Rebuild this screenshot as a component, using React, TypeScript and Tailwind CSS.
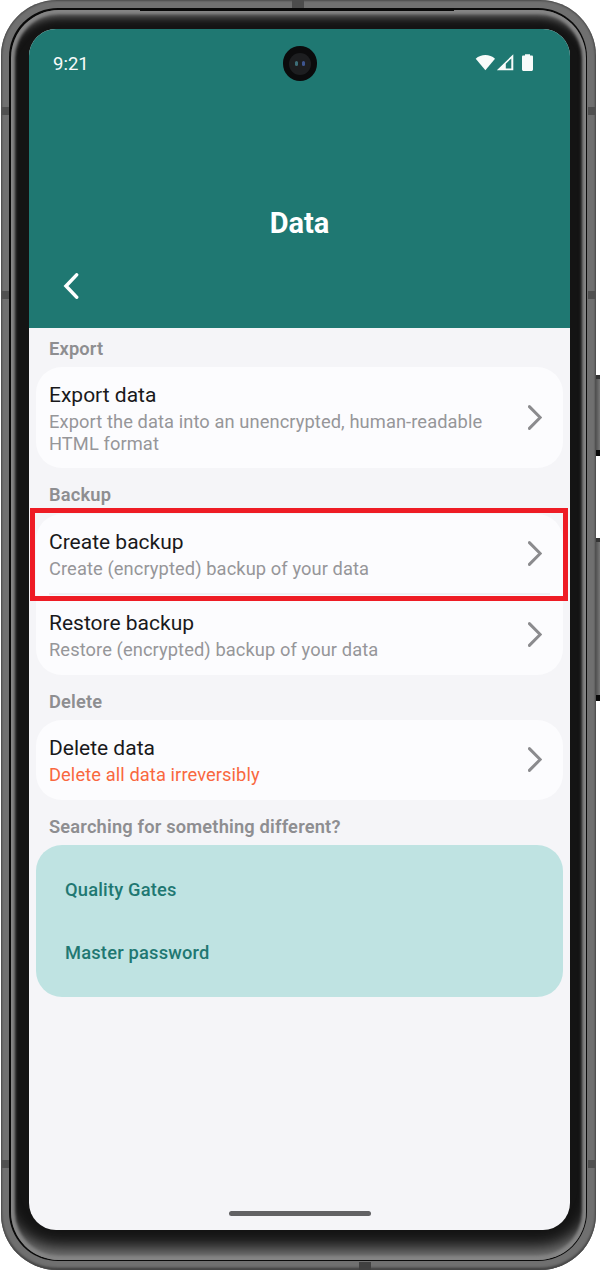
import React from "react";

function Chevron({ className, flip = false, w = 14, h = 25 }: { className?: string; flip?: boolean; w?: number; h?: number }) {
  return (
    <svg width={w} height={h} viewBox="0 0 14 25" fill="none" className={className}>
      <path
        d={flip ? "M12.4 1.8 L2.2 12.5 L12.4 23.2" : "M1.4 1.6 L12.2 12.5 L1.4 23.4"}
        stroke="currentColor"
        strokeWidth={flip ? 3.4 : 3}
        strokeLinecap="round"
        strokeLinejoin="miter"
      />
    </svg>
  );
}

function SectionTitle({ children }: { children: React.ReactNode }) {
  return <h2 className="pl-[13px] text-[18.3px] leading-[22px] font-semibold tracking-[0.17px] text-[#8e8e91]">{children}</h2>;
}

function Row({ title, text, danger = false }: { title: string; text: string; danger?: boolean }) {
  return (
    <div className="flex items-center justify-between pt-[17px] pb-[13px] pl-[13px] pr-[21px]">
      <div className="w-[440px]">
        <div className="text-[21px] leading-[23px] text-[#19191b]">{title}</div>
        <div
          className={
            danger
              ? "mt-1 text-[18.3px] leading-[22px] tracking-[0.09px] text-[#f9683f]"
              : "mt-1 text-[18.3px] leading-[22px] tracking-[0.09px] text-[#969699]"
          }
        >
          {text}
        </div>
      </div>
      <Chevron className="mb-1 text-[#8b8b8e]" />
    </div>
  );
}

function StatusBar() {
  return (
    <div className="relative flex h-[70px] items-center justify-between pl-6 pr-9 text-[#f8fbfa]">
      <span className="text-[18.5px] leading-[22px]">9:21</span>
      <div className="absolute left-[253.5px] top-[17px] flex h-[35px] w-[34px] items-center justify-center rounded-full bg-[#0b0b0c]">
        <div className="flex h-[22px] w-[22px] items-center justify-center gap-1 rounded-full bg-[#1d1e20]">
          <span className="h-[5px] w-[3px] rounded-full bg-[#3d6e78]" />
          <span className="h-[5px] w-[3px] rounded-full bg-[#3e558f]" />
        </div>
      </div>
      <svg width="59" height="20" viewBox="0 0 59 20" className="mt-[-2px]" fill="currentColor">
        <path d="M0.7 5.7 C6 0.8 14.8 0.8 20 5.7 L10.4 17.2Z" />
        <path fillRule="evenodd" d="M21.8 17.2 L38.3 1.2 V17.2Z M30.8 10.7 V15.4 H36.3 V5.5Z" />
        <path d="M50 1.2 H55 V2.6 H57 Q58 2.6 58 3.7 V16.6 Q58 18 56.7 18 H48.3 Q47 18 47 16.6 V3.7 Q47 2.6 48 2.6 H50Z" />
      </svg>
    </div>
  );
}

const card = "rounded-[26px] bg-[#fcfcfe]";

export default function App() {
  return (
    <div className="relative h-[1271px] w-[600px] overflow-hidden bg-white font-['Roboto',sans-serif]">
      <div className="absolute left-[595px] top-[375px] h-[81px] w-[5px] border-t-4 border-b-6 border-t-[#343434] border-b-[#090909] bg-linear-to-r from-[#4a4a4a] to-[#777777]" />
      <div className="absolute left-[595px] top-[538px] h-[163px] w-[5px] border-t-4 border-b-6 border-t-[#343434] border-b-[#090909] bg-linear-to-r from-[#4a4a4a] to-[#777777]" />

      <div className="relative ml-px h-[1270px] w-[595px] rounded-[56px] bg-[#707070] p-2 shadow-[inset_0_0_2px_1px_#4a4a4a,inset_0_-3px_3px_-1px_#3c3c3c]">
        <div className="absolute left-0 top-[107px] h-2 w-2 bg-[#505050]" />
        <div className="absolute left-0 top-[291px] h-2 w-2 bg-[#505050]" />
        <div className="absolute left-0 top-[1160px] h-2 w-2 bg-[#505050]" />
        <div className="absolute right-0 top-[107px] h-2 w-2 bg-[#505050]" />
        <div className="absolute right-0 top-[291px] h-2 w-2 bg-[#505050]" />
        <div className="absolute right-0 top-[1160px] h-2 w-2 bg-[#505050]" />
        <div className="absolute left-[291px] top-0 h-2 w-3 bg-[#4c4c4c]" />
        <div className="absolute bottom-0 left-[358px] h-2 w-3 bg-[#414141]" />

        <div className="relative h-[1253px] w-[578px] rounded-[49px] bg-[#0a0a0a] p-[1.5px]">
          <div className="absolute left-[131px] top-0 z-10 h-[3px] w-[314px] bg-[#080808]" />
          <div className="h-[1250px] w-[575px] rounded-[48px] bg-[#141414] pl-[18.5px] pt-[19.5px] shadow-[inset_0_0_3px_4px_#858585,inset_0_-22px_16px_-10px_#7c7c7c,inset_0_13px_9px_-6px_#6a6a6a]">
            <div className="flex h-[1201px] w-[541px] flex-col overflow-hidden rounded-[27px] bg-[#f5f5f8]">
              <header className="flex h-[299px] shrink-0 flex-col bg-[#1f7872] text-white">
                <StatusBar />
                <h1 className="mt-[107px] text-center text-[29px] leading-[34px] font-bold">Data</h1>
                <button className="ml-[34px] mt-[33px] h-[26px] w-4 text-white" aria-label="Back">
                  <Chevron flip w={16} h={26} />
                </button>
              </header>
              <main className="flex flex-1 flex-col px-[7px] pt-[10px]">
                <SectionTitle>Export</SectionTitle>
                <section className={"mt-[7px] h-[101px] " + card}>
                  <Row title="Export data" text="Export the data into an unencrypted, human-readable HTML format" />
                </section>
                <div className="mt-4"><SectionTitle>Backup</SectionTitle></div>
                <section className={"relative mt-2 h-[161px] " + card}>
                  <Row title="Create backup" text="Create (encrypted) backup of your data" />
                  <div className="mx-[13px] h-[2px] bg-[#f0f0f4]" />
                  <Row title="Restore backup" text="Restore (encrypted) backup of your data" />
                  <div className="absolute left-[-6px] top-[-6px] h-[93px] w-[538px] border-5 border-[#ee1c25]" />
                </section>
                <div className="mt-4"><SectionTitle>Delete</SectionTitle></div>
                <section className={"mt-[7px] h-[80px] " + card}>
                  <Row title="Delete data" text="Delete all data irreversibly" danger />
                </section>
                <div className="mt-4"><SectionTitle>Searching for something different?</SectionTitle></div>
                <section className="mt-[7px] flex h-[152px] flex-col gap-[41px] rounded-[26px] bg-[#bfe3e2] pl-[29px] pt-[34px] text-[18.3px] leading-[22px] font-medium tracking-[0.2px] text-[#1f7872]">
                  <a>Quality Gates</a>
                  <a>Master password</a>
                </section>
                <div className="mx-auto mb-[14px] mt-auto h-[5px] w-[142px] rounded-full bg-[#626264]" />
              </main>
            </div>
          </div>
        </div>
      </div>
    </div>
  );
}
